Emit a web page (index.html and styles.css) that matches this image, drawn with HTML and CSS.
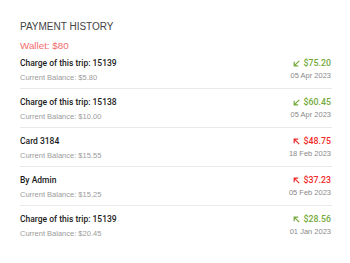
FILE: index.html
```html
<!DOCTYPE html>
<html>
<head>
<meta charset="utf-8">
<link rel="stylesheet" href="styles.css">
</head>
<body>
<div class="panel">
  <h1 class="title">PAYMENT HISTORY</h1>
  <div class="wallet">Wallet: $80</div>
  <ul class="list">
    <li class="row">
      <div class="left">
        <div class="name">Charge of this trip: 15139</div>
        <div class="balance">Current Balance: $5.80</div>
      </div>
      <div class="right">
        <div class="amount in"><svg class="ic" viewBox="0 0 7 7"><path d="M6.2 0.8 L1.2 5.8 M1.2 1.8 V5.8 H5.2"/></svg>$75.20</div>
        <div class="date">05 Apr 2023</div>
      </div>
    </li>
    <li class="row">
      <div class="left">
        <div class="name">Charge of this trip: 15138</div>
        <div class="balance">Current Balance: $10.00</div>
      </div>
      <div class="right">
        <div class="amount in"><svg class="ic" viewBox="0 0 7 7"><path d="M6.2 0.8 L1.2 5.8 M1.2 1.8 V5.8 H5.2"/></svg>$60.45</div>
        <div class="date">05 Apr 2023</div>
      </div>
    </li>
    <li class="row">
      <div class="left">
        <div class="name">Card 3184</div>
        <div class="balance">Current Balance: $15.55</div>
      </div>
      <div class="right">
        <div class="amount out"><svg class="ic" viewBox="0 0 7 7"><path d="M6.2 6.2 L1.2 1.2 M1.2 5.2 V1.2 H5.2"/></svg>$48.75</div>
        <div class="date">18 Feb 2023</div>
      </div>
    </li>
    <li class="row">
      <div class="left">
        <div class="name">By Admin</div>
        <div class="balance">Current Balance: $15.25</div>
      </div>
      <div class="right">
        <div class="amount out"><svg class="ic" viewBox="0 0 7 7"><path d="M6.2 6.2 L1.2 1.2 M1.2 5.2 V1.2 H5.2"/></svg>$37.23</div>
        <div class="date">05 Feb 2023</div>
      </div>
    </li>
    <li class="row last">
      <div class="left">
        <div class="name">Charge of this trip: 15139</div>
        <div class="balance">Current Balance: $20.45</div>
      </div>
      <div class="right">
        <div class="amount in"><svg class="ic" viewBox="0 0 7 7"><path d="M6.2 6.2 L1.2 1.2 M1.2 5.2 V1.2 H5.2"/></svg>$28.56</div>
        <div class="date">01 Jan 2023</div>
      </div>
    </li>
  </ul>
</div>
</body>
</html>
```

FILE: styles.css
```css
* { box-sizing: border-box; }
html, body { margin: 0; padding: 0; background: #ffffff; }
body { font-family: "Liberation Sans", Arial, sans-serif; }
.panel { width: 350px; padding: 20px 18px 0 20px; }
.title {
  margin: 0;
  font-size: 10px;
  line-height: 13px;
  font-weight: 400;
  color: #444444;
}
.wallet {
  margin-top: 7px;
  font-size: 9.8px;
  line-height: 12px;
  color: #f26b6b;
}
.list { list-style: none; margin: 0; padding: 0; }
.row {
  display: flex;
  justify-content: space-between;
  padding: 8px 1px 5px 0;
  border-bottom: 1px solid #e9e9e9;
}
.row:first-child { padding-top: 6px; }
.row.last { border-bottom: none; }
.left, .right { display: flex; flex-direction: column; }
.right { align-items: flex-end; }
.name {
  font-family: Roboto, "Liberation Sans", sans-serif;
  font-size: 8.5px;
  line-height: 11px;
  font-weight: 500;
  color: #1c1c1c;
}
.balance {
  margin-top: 4px;
  font-size: 7.5px;
  line-height: 10px;
  color: #9b9b9b;
}
.amount {
  display: flex;
  align-items: center;
  gap: 4px;
  font-family: Roboto, "Liberation Sans", sans-serif;
  font-size: 8.8px;
  line-height: 11px;
  font-weight: 500;
}
.amount.in { color: #74a93a; }
.amount.out { color: #ef2a2a; }
.ic { width: 7px; height: 7px; fill: none; stroke: currentColor; stroke-width: 1.2; }
.date {
  margin-top: 1.5px;
  font-size: 7.5px;
  line-height: 10px;
  color: #8a8a8a;
}
```
